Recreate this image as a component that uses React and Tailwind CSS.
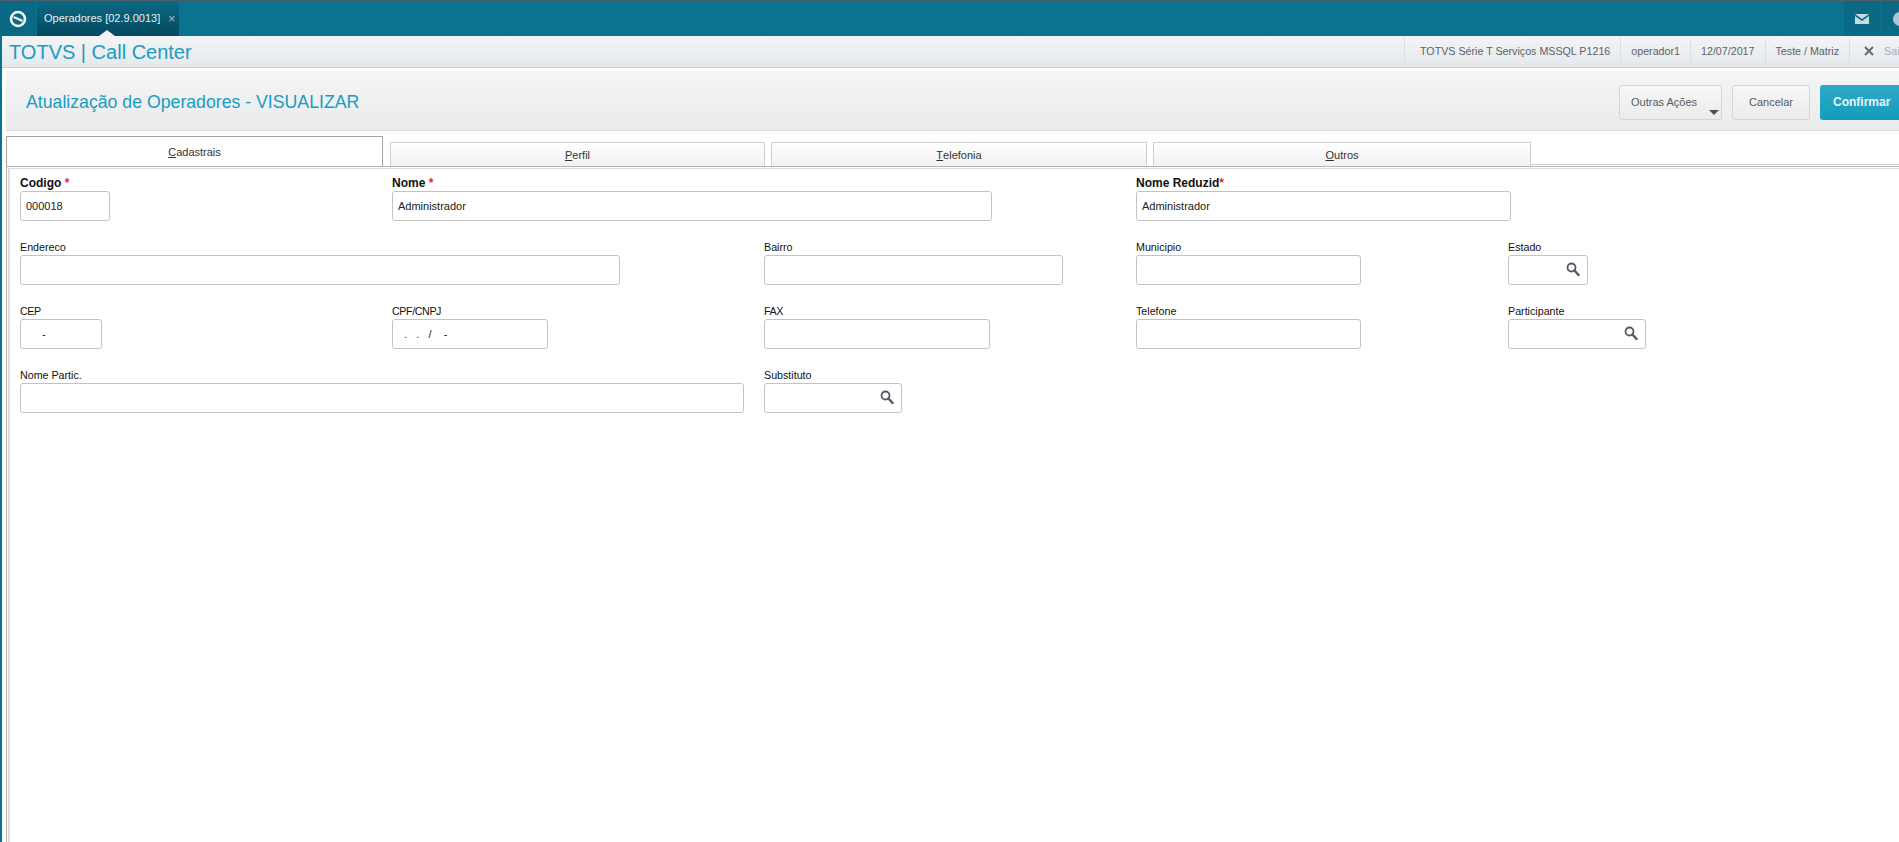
import React from 'react';

const Search = () => (
    <svg width="14" height="15" viewBox="0 0 14 15" className="absolute right-[7px] top-[6px]">
        <circle cx="5.5" cy="5.5" r="4" fill="#fff" stroke="#4f5a66" strokeWidth="1.8" />
        <path d="M8.5 8.5l4 4.5" stroke="#4f5a66" strokeWidth="2.4" strokeLinecap="round" />
    </svg>
);

const Field = ({ label, bold, req, caps, value, search, width, className = '' }) => (
    <div className={`flex flex-col ${className}`}>
        <label className={`h-4 whitespace-nowrap leading-4 text-[#111] ${bold ? 'text-[12px] font-bold' : 'text-[10.7px]'} ${caps ? 'tracking-[-0.4px]' : ''}`}>
            {label}
            {req && <span className="text-[#ee1c3c]">{req}</span>}
        </label>
        <div className={`relative h-[30px] whitespace-pre rounded-[3px] border border-[#c3c3c3] bg-white pl-[5px] text-[11px] leading-[28px] text-[#222] ${width}`}>
            {value}
            {search && <Search />}
        </div>
    </div>
);

const Tab = ({ letter, rest, active, width }) => (
    <div className={`flex items-center justify-center border border-b-0 text-[11px] text-[#333] ${width} ${active ? 'h-[30px] border-[#a5a5a5] bg-white pt-[1px]' : 'h-[24px] border-[#cfcfcf] bg-gradient-to-b from-white to-[#f2f2f2] pt-[2px]'}`}>
        <span className="underline decoration-[#333]">{letter}</span>{rest}
    </div>
);

const Info = ({ children }) => (
    <div className="flex h-[28px] items-center whitespace-nowrap border-r border-[#dcdfe1] px-[10px] text-[10.7px] text-[#5c6268]">{children}</div>
);

export default function App() {
    return (
        <div className="h-[842px] w-[1899px] overflow-hidden bg-white font-['Liberation_Sans',Arial,sans-serif]">
            <div className="flex h-[36px] border-t border-[#4c5f68] bg-[#0b7290]">
                <div className="flex w-[36px] items-center justify-center bg-[#0a6a86]">
                    <svg width="18" height="18" viewBox="0 0 18 18">
                        <circle cx="9" cy="9" r="7" fill="none" stroke="#eef4f6" strokeWidth="2.6" />
                        <path d="M4.5 7l9 3.8" stroke="#eef4f6" strokeWidth="2.4" />
                    </svg>
                </div>
                <div className="relative ml-px flex w-[142px] items-center whitespace-nowrap bg-gradient-to-b from-[#0a6a84] to-[#05495f] pl-[7px] text-[11px] text-[#e6f0f3]">
                    Operadores [02.9.0013]
                    <span className="ml-[8px] text-[12px] leading-none text-[#9cc0cc]">×</span>
                    <span className="absolute bottom-0 left-[62px] h-0 w-0 border-x-[8px] border-b-[6px] border-x-transparent border-b-[#f0f2f3]" />
                </div>
                <div className="flex-1" />
                <div className="flex w-[36px] items-center justify-center bg-[#0a6a86]">
                    <svg width="14" height="10" viewBox="0 0 14 10">
                        <path d="M0 0h14L7 5z" fill="#c5dbe3" />
                        <path d="M0 2l7 5 7-5v8H0z" fill="#c5dbe3" />
                    </svg>
                </div>
                <div className="ml-px flex w-[18px] items-center overflow-hidden bg-[#0a6a86]">
                    <span className="ml-[12px] h-[14px] w-[14px] shrink-0 rounded-full bg-[#a8c8d4]" />
                </div>
            </div>

            <div className="border-l-2 border-[#0b7290]">
                <div className="flex h-[32px] items-center justify-between border-b border-[#ccd0d3] bg-gradient-to-b from-[#f2f4f5] to-[#e6e9ec] pl-[7px]">
                    <div className="text-[20px] leading-none text-[#1a9cc0]">TOTVS | Call Center</div>
                    <div className="flex w-[495px] shrink-0 items-center">
                        <div className="flex h-[28px] items-center whitespace-nowrap border-x border-[#dcdfe1] px-[15px] pr-[10px] text-[10.7px] text-[#5c6268]">TOTVS Série T Serviços MSSQL P1216</div>
                        <Info>operador1</Info>
                        <Info>12/07/2017</Info>
                        <Info>Teste / Matriz</Info>
                        <div className="flex items-center whitespace-nowrap pl-[13px] text-[10.7px] text-[#a4a9ad]">
                            <svg width="12" height="12" viewBox="0 0 12 12" className="mr-[9px]">
                                <path d="M2 2l8 8M10 2l-8 8" stroke="#666c72" strokeWidth="2" />
                            </svg>
                            Sair
                        </div>
                    </div>
                </div>

                <div className="ml-[4px] mt-[3px] flex h-[60px] items-center justify-between border-b border-[#dcdcdc] bg-gradient-to-b from-[#f4f5f5] to-[#e9ebed] pl-[20px]">
                    <div className="pt-[3px] text-[17.7px] text-[#1a9cc0]">Atualização de Operadores - VISUALIZAR</div>
                    <div className="mr-[-9px] flex w-[289px] shrink-0 gap-[10px] pt-[3px]">
                        <div className="relative h-[35px] w-[103px] rounded-[3px] border border-[#d5d5d5] bg-gradient-to-b from-[#f7f7f7] to-[#ebebeb] pl-[11px] text-[11px] leading-[33px] text-[#555b61]">
                            Outras Ações
                            <span className="absolute bottom-[4px] right-[2px] h-0 w-0 border-x-[5px] border-t-[5px] border-x-transparent border-t-[#4a4f55]" />
                        </div>
                        <div className="h-[35px] w-[78px] rounded-[3px] border border-[#d5d5d5] bg-gradient-to-b from-[#f7f7f7] to-[#ebebeb] text-center text-[11px] leading-[33px] text-[#555b61]">Cancelar</div>
                        <div className="h-[35px] w-[88px] shrink-0 rounded-[3px] bg-gradient-to-b from-[#2ea8c8] to-[#0f9dbd] pl-[13px] text-[12px] font-bold leading-[35px] text-[#e8f6fa]">Confirmar</div>
                    </div>
                </div>

                <div className="ml-[4px] mt-[5px] flex h-[30px] items-end">
                    <Tab letter="C" rest="adastrais" active width="w-[377px]" />
                    <div className="ml-[7px] flex gap-[6px]">
                        <Tab letter="P" rest="erfil" width="w-[375px]" />
                        <Tab letter="T" rest="elefonia" width="w-[376px]" />
                        <Tab letter="O" rest="utros" width="w-[378px]" />
                    </div>
                    <div className="mb-[1px] h-[1px] flex-1 bg-[#cfcfcf]" />
                </div>

                <div className="ml-[4px] h-[676px] border-l border-t border-[#b5b5b5]">
                    <div className="ml-[1px] mt-[1px] h-full border-l-2 border-t border-[#dddddd] pl-[10px] pt-[6px]">
                        <div className="grid grid-cols-[repeat(5,372px)] gap-y-[18px]">
                            <Field label="Codigo " req="*" bold value="000018" width="w-[90px]" />
                            <Field label="Nome " req="*" bold value="Administrador" width="w-[600px]" className="col-span-2" />
                            <Field label="Nome Reduzid" req="*" bold value="Administrador" width="w-[375px]" className="col-span-2" />

                            <Field label="Endereco" width="w-[600px]" className="col-span-2" />
                            <Field label="Bairro" width="w-[299px]" />
                            <Field label="Municipio" width="w-[225px]" />
                            <Field label="Estado" search width="w-[80px]" />

                            <Field label="CEP" caps value={<span className="pl-[16px]">-</span>} width="w-[82px]" />
                            <Field label="CPF/CNPJ" caps value="  .   .   /    -" width="w-[156px]" />
                            <Field label="FAX" caps width="w-[226px]" />
                            <Field label="Telefone" width="w-[225px]" />
                            <Field label="Participante" search width="w-[138px]" />

                            <Field label="Nome Partic." width="w-[724px]" className="col-span-2" />
                            <Field label="Substituto" search width="w-[138px]" />
                        </div>
                    </div>
                </div>
            </div>
        </div>
    );
}
